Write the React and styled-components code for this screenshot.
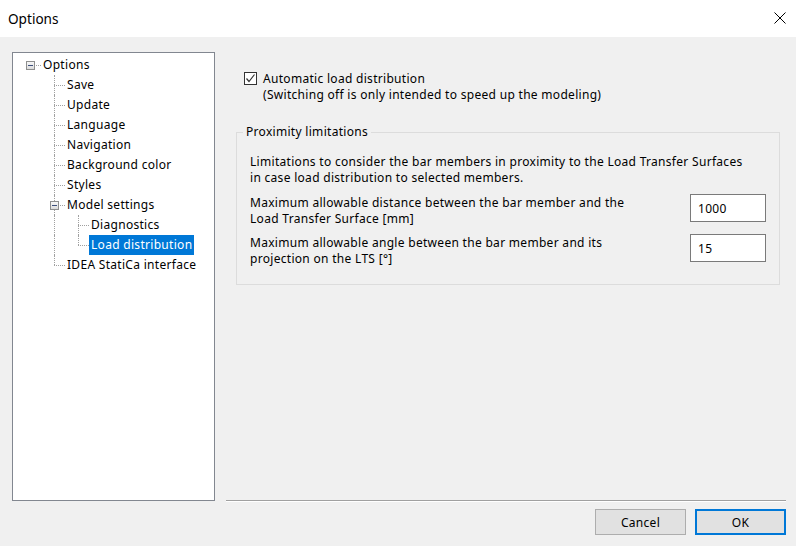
import React from "react";
import styled, { createGlobalStyle } from "styled-components";

const GlobalStyle = createGlobalStyle`
  html, body {
    margin: 0;
    padding: 0;
    background: #f0f0f0;
  }
  body {
    font-family: "Noto Sans", "Liberation Sans", sans-serif;
    font-size: 12px;
    letter-spacing: 0.3px;
    color: #000;
  }
`;

const Window = styled.div`
  width: 796px;
  height: 546px;
  display: flex;
  flex-direction: column;
  background: #f0f0f0;
  overflow: hidden;
`;

const TitleBar = styled.div`
  height: 37px;
  flex-shrink: 0;
  background: #fff;
  display: flex;
  align-items: center;
  justify-content: space-between;
  padding: 0 10px 0 8px;
`;

const Title = styled.span`
  font-size: 13.6px;
  letter-spacing: 0;
  margin-top: -1px;
`;

const CloseButton = styled.span`
  display: flex;
  width: 12px;
  height: 12px;
  margin-top: -1px;
`;

const Body = styled.div`
  flex: 1;
  display: flex;
  flex-direction: column;
  padding: 15px 10px 0 12px;
`;

const Main = styled.div`
  display: flex;
  height: 449px;
`;

const Tree = styled.div`
  width: 203px;
  box-sizing: border-box;
  border: 1px solid #828790;
  background: #fff;
  padding: 2px 0 0 5px;
`;

const TreeRow = styled.div`
  display: flex;
  align-items: center;
  height: 20px;
`;

const Cell = styled.span`
  position: relative;
  width: 24px;
  height: 20px;
  flex-shrink: 0;

  &::before {
    content: "";
    display: ${(p) => (p.$kind === "none" || p.$kind === "root" ? "none" : "block")};
    position: absolute;
    left: 12px;
    top: 0;
    height: ${(p) => (p.$kind === "end" ? "10px" : "20px")};
    border-left: 1px dotted #a0a0a0;
  }

  &::after {
    content: "";
    display: ${(p) => (p.$kind === "none" || p.$kind === "pass" ? "none" : "block")};
    position: absolute;
    left: 12px;
    top: 10px;
    width: 11px;
    border-top: 1px dotted #a0a0a0;
  }
`;

const Expander = styled.span`
  position: absolute;
  z-index: 1;
  left: 8px;
  top: 6px;
  width: 9px;
  height: 9px;
  box-sizing: border-box;
  border: 1px solid #8e8f8f;
  background: linear-gradient(#f7f7f7, #dcdcdc);

  &::after {
    content: "";
    position: absolute;
    left: 1px;
    top: 3px;
    width: 5px;
    height: 1px;
    background: #3c4f7c;
  }
`;

const TreeLabel = styled.span`
  margin-left: -1px;
  padding: 0 2px;
  line-height: 20px;
  white-space: nowrap;
  background: ${(p) => (p.$selected ? "#0078d7" : "transparent")};
  color: ${(p) => (p.$selected ? "#fff" : "#000")};
`;

const RightColumn = styled.div`
  flex: 1;
  display: flex;
  flex-direction: column;
  margin-left: 11px;
`;

const Content = styled.div`
  flex: 1;
  padding: 19px 6px 0 10px;
`;

const CheckRow = styled.label`
  display: flex;
  align-items: flex-start;
  padding-left: 8px;
  line-height: 16px;
`;

const CheckBox = styled.span`
  width: 13px;
  height: 13px;
  box-sizing: border-box;
  border: 1px solid #333;
  background: #fff;
  margin-top: 1px;
  margin-right: 6px;
  display: flex;
  flex-shrink: 0;
`;

const GroupBox = styled.fieldset`
  margin: 21px 0 0 0;
  padding: 14px 13px 10px 13px;
  border: 1px solid #dcdcdc;
  border-radius: 0;
  min-width: 0;
`;

const Legend = styled.legend`
  margin-left: -7px;
  padding: 0 3px;
  line-height: 16px;
`;

const Description = styled.p`
  margin: 0 0 8px 0;
  line-height: 16px;
`;

const FieldRow = styled.div`
  display: flex;
  justify-content: space-between;
  align-items: flex-start;
  height: 40px;
`;

const FieldLabel = styled.span`
  line-height: 16px;
  padding-top: 1px;
`;

const Input = styled.div`
  width: 76px;
  height: 28px;
  box-sizing: border-box;
  border: 1px solid #7a7a7a;
  background: #fff;
  display: flex;
  align-items: center;
  padding-left: 7px;
`;

const Separator = styled.div`
  height: 0;
  border-top: 1px solid #a0a0a0;
  border-bottom: 1px solid #fff;
  margin-top: auto;
  margin-bottom: -1px;
`;

const Footer = styled.div`
  display: flex;
  justify-content: flex-end;
  gap: 9px;
  margin-top: 8px;
`;

const Button = styled.button`
  width: 91px;
  height: 26px;
  box-sizing: border-box;
  font: inherit;
  letter-spacing: 0.3px;
  color: #000;
  background: #e1e1e1;
  border: ${(p) => (p.$default ? "2px solid #0078d7" : "1px solid #adadad")};
  padding: 0;
`;

const treeItems = [
  { label: "Options", guides: ["root"], expander: true },
  { label: "Save", guides: ["none", "tee"] },
  { label: "Update", guides: ["none", "tee"] },
  { label: "Language", guides: ["none", "tee"] },
  { label: "Navigation", guides: ["none", "tee"] },
  { label: "Background color", guides: ["none", "tee"] },
  { label: "Styles", guides: ["none", "tee"] },
  { label: "Model settings", guides: ["none", "tee"], expander: true },
  { label: "Diagnostics", guides: ["none", "pass", "tee"] },
  { label: "Load distribution", guides: ["none", "pass", "end"], selected: true },
  { label: "IDEA StatiCa interface", guides: ["none", "end"] },
];

function App() {
  return (
    <Window>
      <GlobalStyle />
      <TitleBar>
        <Title>Options</Title>
        <CloseButton>
          <svg width="12" height="12" viewBox="0 0 12 12">
            <path d="M0.5 0.5 L11.5 11.5 M11.5 0.5 L0.5 11.5" stroke="#000" strokeWidth="1" fill="none" />
          </svg>
        </CloseButton>
      </TitleBar>
      <Body>
        <Main>
          <Tree>
            {treeItems.map((item) => (
              <TreeRow key={item.label}>
                {item.guides.map((kind, i) => (
                  <Cell key={i} $kind={kind}>
                    {item.expander && i === item.guides.length - 1 && <Expander />}
                  </Cell>
                ))}
                <TreeLabel $selected={item.selected}>{item.label}</TreeLabel>
              </TreeRow>
            ))}
          </Tree>
          <RightColumn>
            <Content>
              <CheckRow>
                <CheckBox>
                  <svg width="11" height="11" viewBox="0 0 11 11">
                    <path d="M1.5 5.5 L4 8.5 L9.5 1.5" stroke="#333" strokeWidth="1.2" fill="none" />
                  </svg>
                </CheckBox>
                <span>
                  Automatic load distribution
                  <br />
                  (Switching off is only intended to speed up the modeling)
                </span>
              </CheckRow>
              <GroupBox>
                <Legend>Proximity limitations</Legend>
                <Description>
                  Limitations to consider the bar members in proximity to the Load Transfer Surfaces
                  <br />
                  in case load distribution to selected members.
                </Description>
                <FieldRow>
                  <FieldLabel>
                    Maximum allowable distance between the bar member and the
                    <br />
                    Load Transfer Surface [mm]
                  </FieldLabel>
                  <Input>1000</Input>
                </FieldRow>
                <FieldRow>
                  <FieldLabel>
                    Maximum allowable angle between the bar member and its
                    <br />
                    projection on the LTS [°]
                  </FieldLabel>
                  <Input>15</Input>
                </FieldRow>
              </GroupBox>
            </Content>
            <Separator />
          </RightColumn>
        </Main>
        <Footer>
          <Button>Cancel</Button>
          <Button $default>OK</Button>
        </Footer>
      </Body>
    </Window>
  );
}

export default App;
